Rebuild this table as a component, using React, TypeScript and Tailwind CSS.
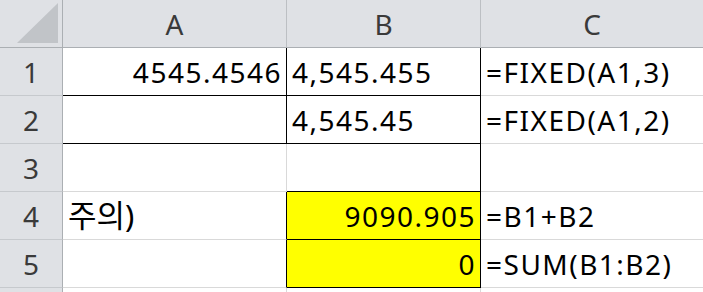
import React from "react";

const FONT = { fontFamily: '"Noto Sans", "Noto Sans CJK KR", sans-serif' };

type CellProps = {
  text?: React.ReactNode;
  align?: "left" | "right";
  r?: "black" | "gray";
  b?: "black" | "gray";
  yellow?: boolean;
};

function Cell({ text = "", align = "left", r = "gray", b = "gray", yellow = false }: CellProps) {
  return (
    <div
      className={[
        "flex items-center h-[48px] overflow-hidden whitespace-nowrap text-[28px] tracking-[1.5px] text-black border-r border-b",
        r === "black" ? "border-r-black" : "border-r-[#d9d9d9]",
        b === "black" ? "border-b-black" : "border-b-[#d9d9d9]",
        yellow ? "bg-[#ffff00]" : "bg-white",
        align === "right" ? "justify-end pr-[4px]" : "justify-start pl-[5px]",
      ].join(" ")}
    >
      {text}
    </div>
  );
}

function ColHead({ label }: { label: string }) {
  return (
    <div className="flex items-center justify-center h-[48px] bg-[#dfe1e5] border-r border-b border-r-[#bcbfc3] border-b-[#abafb3] text-[28px] text-[#3a3a3a]">
      {label}
    </div>
  );
}

function RowHead({ label }: { label: string }) {
  return (
    <div className="flex items-center justify-center h-[48px] bg-[#dfe1e5] border-r border-b border-r-[#abafb3] border-b-[#c6c9cd] text-[28px] text-[#3a3a3a]">
      {label}
    </div>
  );
}

export default function App() {
  return (
    <div className="w-[703px] h-[292px] overflow-hidden bg-white" style={FONT}>
      <div className="grid grid-cols-[63px_224px_194px_223px] w-[704px]">
        {/* header */}
        <div className="relative h-[48px] bg-[#dfe1e5] border-r border-b border-r-[#abafb3] border-b-[#abafb3]">
          <svg className="absolute left-0 top-0" width="62" height="47" viewBox="0 0 62 47">
            <polygon points="17,43 58,43 58,3" fill="#c1c4c8" />
          </svg>
        </div>
        <ColHead label="A" />
        <ColHead label="B" />
        <ColHead label="C" />

        {/* row 1 */}
        <RowHead label="1" />
        <Cell text="4545.4546" align="right" r="black" b="black" />
        <Cell text="4,545.455" r="black" b="black" />
        <Cell text="=FIXED(A1,3)" />

        {/* row 2 */}
        <RowHead label="2" />
        <Cell r="black" b="black" />
        <Cell text="4,545.45" r="black" b="black" />
        <Cell text="=FIXED(A1,2)" />

        {/* row 3 */}
        <RowHead label="3" />
        <Cell />
        <Cell r="black" b="black" />
        <Cell />

        {/* row 4 */}
        <RowHead label="4" />
        <Cell text={<span className="text-[31px] tracking-[0px]">주의)</span>} r="black" />
        <Cell text="9090.905" align="right" r="black" b="black" yellow />
        <Cell text="=B1+B2" />

        {/* row 5 */}
        <RowHead label="5" />
        <Cell r="black" />
        <Cell text="0" align="right" r="black" b="black" yellow />
        <Cell text="=SUM(B1:B2)" />

        {/* row 6 (only its top edge is visible) */}
        <RowHead label="" />
        <Cell />
        <Cell />
        <Cell />
      </div>
    </div>
  );
}
